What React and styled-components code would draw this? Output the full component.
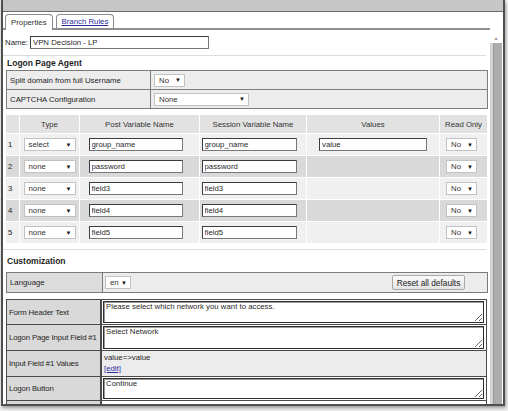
import React from "react";
import styled, { createGlobalStyle } from "styled-components";

const GlobalStyle = createGlobalStyle`
  html, body { margin: 0; padding: 0; background: #ececec; }
  body {
    font-family: "Liberation Sans", "DejaVu Sans", sans-serif;
    font-size: 7.8px;
    color: #252525;
  }
  * { box-sizing: border-box; }
`;

const rows = [
  { n: 1, type: "select", post: "group_name", sess: "group_name", value: "value" },
  { n: 2, type: "none", post: "password", sess: "password" },
  { n: 3, type: "none", post: "field3", sess: "field3" },
  { n: 4, type: "none", post: "field4", sess: "field4" },
  { n: 5, type: "none", post: "field5", sess: "field5" },
];

const Select = ({ w, children }) => (
  <SelectBox $w={w}>
    <span>{children}</span>
    <Arrow>▼</Arrow>
  </SelectBox>
);

const App = () => {
  return (
    <Frame>
      <GlobalStyle />
      <Window>
        <TopBar />
        <Tabs>
          <Tab $active>Properties</Tab>
          <Tab>
            <TabLink>Branch Rules</TabLink>
          </Tab>
        </Tabs>
        <Pane>
          <Content>
            <NameRow>
              <span>Name:</span>
              <TextInput $w={179} readOnly defaultValue="VPN Decision - LP" />
            </NameRow>
            <Rule />
            <Heading>Logon Page Agent</Heading>
            <AgentTable>
              <AgentCell>Split domain from full Username</AgentCell>
              <AgentCell>
                <Select w={31}>No</Select>
              </AgentCell>
              <AgentCell $last>CAPTCHA Configuration</AgentCell>
              <AgentCell $last>
                <Select w={95}>None</Select>
              </AgentCell>
            </AgentTable>

            <VarGrid>
              <HeadCell />
              <HeadCell>Type</HeadCell>
              <HeadCell>Post Variable Name</HeadCell>
              <HeadCell>Session Variable Name</HeadCell>
              <HeadCell>Values</HeadCell>
              <HeadCell>Read Only</HeadCell>
              {rows.map((r) => {
                const dark = r.n % 2 === 0;
                return (
                  <React.Fragment key={r.n}>
                    <Cell $dark={dark} $left>{r.n}</Cell>
                    <Cell $dark={dark}>
                      <Select w={52}>{r.type}</Select>
                    </Cell>
                    <Cell $dark={dark} $shift={-4}>
                      <TextInput $w={94} readOnly defaultValue={r.post} />
                    </Cell>
                    <Cell $dark={dark} $shift={-4}>
                      <TextInput $w={95} readOnly defaultValue={r.sess} />
                    </Cell>
                    <Cell $dark={dark}>
                      {r.value && <TextInput $w={108} readOnly defaultValue={r.value} />}
                    </Cell>
                    <Cell $dark={dark} $shift={-2}>
                      <Select w={31}>No</Select>
                    </Cell>
                  </React.Fragment>
                );
              })}
            </VarGrid>

            <Rule $gap={6} />
            <Heading $tall>Customization</Heading>
            <LangBox>
              <LangLabel>Language</LangLabel>
              <LangValue>
                <Select w={26}>en</Select>
                <ResetButton>Reset all defaults</ResetButton>
              </LangValue>
            </LangBox>

            <FormTable>
              <Label $h={25}>Form Header Text</Label>
              <Value>
                <Area readOnly defaultValue="Please select which network you want to access." />
              </Value>
              <Label $h={26}>Logon Page Input Field #1</Label>
              <Value>
                <Area readOnly defaultValue="Select Network" />
              </Value>
              <Label $h={26}>Input Field #1 Values</Label>
              <Value $grey>
                <Plain>
                  <div>value=&gt;value</div>
                  <EditLink>[edit]</EditLink>
                </Plain>
              </Value>
              <Label $h={24}>Logon Button</Label>
              <Value>
                <Area readOnly defaultValue="Continue" />
              </Value>
              <Label $h={20} />
              <Value />
            </FormTable>
          </Content>
          <Scrollbar>
            <UpArrow>▲</UpArrow>
            <Track>
              <Thumb />
            </Track>
          </Scrollbar>
        </Pane>
      </Window>
    </Frame>
  );
};

export default App;

const Frame = styled.div`
  width: 508px;
  height: 411px;
  overflow: hidden;
  padding-left: 1px;
  background: #efefef;
`;

const Window = styled.div`
  width: 504px;
  height: 406px;
  border: 2px solid #4f4f4f;
  border-top: none;
  background: #fff;
  display: flex;
  flex-direction: column;
  overflow: hidden;
  box-shadow: 1px 2px 3px rgba(0, 0, 0, 0.35);
`;

const TopBar = styled.div`
  height: 12px;
  flex: none;
  background: #c6c6c6;
  border-bottom: 1px solid #6c6c6c;
`;

const Tabs = styled.div`
  height: 18px;
  flex: none;
  display: flex;
  align-items: flex-end;
  gap: 3px;
  padding-left: 2px;
  margin-right: 13px;
  border-bottom: 2px solid #8e8e8e;
`;

const Tab = styled.div`
  height: ${(p) => (p.$active ? "16px" : "14px")};
  margin-bottom: ${(p) => (p.$active ? "-2px" : "0")};
  padding: 0 5px;
  display: flex;
  align-items: center;
  background: #fff;
  border: 1px solid #8a8a8a;
  border-bottom: none;
  border-radius: 4px 4px 0 0;
  color: #333;
`;

const TabLink = styled.span`
  color: #2d2d9c;
  text-decoration: underline;
`;

const Pane = styled.div`
  flex: 1;
  display: flex;
  min-height: 0;
`;

const Content = styled.div`
  flex: 1;
  padding: 6px 2px 0 3px;
  overflow: hidden;
`;

const NameRow = styled.div`
  display: flex;
  align-items: center;
  gap: 2px;
  height: 13px;
  margin-left: -1px;
`;

const TextInput = styled.input`
  width: ${(p) => p.$w}px;
  height: 13px;
  padding: 0 2px;
  border: 1px solid #3c3c3c;
  border-right-color: #777;
  border-bottom-color: #777;
  background: #fff;
  font: inherit;
  color: #2a2a2a;
  outline: none;
`;

const Rule = styled.div`
  height: 1px;
  margin-top: ${(p) => p.$gap ?? 6}px;
  margin-right: 2px;
  margin-left: -3px;
  background: #dcdcdc;
`;

const Heading = styled.div`
  height: ${(p) => (p.$tall ? 22 : 14)}px;
  line-height: ${(p) => (p.$tall ? 22 : 14)}px;
  padding-left: 1px;
  font-weight: bold;
  font-size: 8.5px;
  color: #1e1e1e;
`;

const AgentTable = styled.div`
  display: grid;
  grid-template-columns: 144px 1fr;
  width: 482px;
  border: 1px solid #7c7c7c;
  background: #ececec;
`;

const AgentCell = styled.div`
  height: ${(p) => (p.$last ? 18 : 19)}px;
  display: flex;
  align-items: center;
  padding-left: 3px;
  border-bottom: ${(p) => (p.$last ? "none" : "1px solid #7c7c7c")};
  &:nth-child(odd) {
    border-right: 1px solid #7c7c7c;
  }
`;

const SelectBox = styled.div`
  width: ${(p) => p.$w}px;
  height: 13px;
  display: flex;
  align-items: center;
  justify-content: space-between;
  padding: 0 3px 0 4px;
  background: #fff;
  border: 1px solid #c2c2c2;
  color: #333;
`;

const Arrow = styled.span`
  font-size: 6px;
  color: #111;
`;

const VarGrid = styled.div`
  display: grid;
  grid-template-columns: 13px 59px 119px 106px 132px 47px;
  grid-template-rows: 18px repeat(5, 21px);
  gap: 1px;
  margin-top: 6px;
  background: #fff;
`;

const HeadCell = styled.div`
  display: flex;
  align-items: center;
  justify-content: center;
  background: #e2e2e2;
  color: #333;
`;

const Cell = styled.div`
  display: flex;
  align-items: center;
  justify-content: ${(p) => (p.$left ? "flex-start" : "center")};
  padding-left: ${(p) => (p.$left ? "2px" : "0")};
  padding-right: ${(p) => (p.$shift ? -p.$shift * 2 : 0)}px;
  background: ${(p) => (p.$dark ? "#d9d9d9" : "#f0f0f0")};
`;

const LangBox = styled.div`
  display: flex;
  width: 482px;
  height: 21px;
  border: 1px solid #7a7a7a;
  background: #ececec;
`;

const LangLabel = styled.div`
  width: 96px;
  display: flex;
  align-items: center;
  padding-left: 3px;
  background: #dcdcdc;
  border-right: 1px solid #7a7a7a;
`;

const LangValue = styled.div`
  flex: 1;
  display: flex;
  align-items: center;
  justify-content: space-between;
  padding: 0 22px 0 2px;
`;

const ResetButton = styled.button`
  height: 15px;
  width: 73px;
  padding: 0;
  font: inherit;
  font-size: 8.3px;
  color: #222;
  border: 1px solid #a9a9a9;
  border-radius: 2px;
  background: linear-gradient(#fafafa, #e4e4e4);
`;

const FormTable = styled.div`
  display: grid;
  grid-template-columns: 95px 1fr;
  width: 481px;
  margin-top: 6px;
  border: 1px solid #4a4a4a;
  border-bottom: none;
`;

const Label = styled.div`
  height: ${(p) => p.$h}px;
  display: flex;
  align-items: center;
  padding-left: 2px;
  letter-spacing: -0.15px;
  background: #d9d9d9;
  border-right: 2px solid #4a4a4a;
  border-bottom: 1px solid #4a4a4a;
  white-space: nowrap;
`;

const Value = styled.div`
  display: flex;
  padding: 1px 2px 1px 1px;
  background: ${(p) => (p.$grey ? "#ececec" : "#fff")};
  border-bottom: 1px solid #4a4a4a;
`;

const Area = styled.textarea`
  flex: 1;
  height: 100%;
  padding: 0 2px;
  font: inherit;
  color: #2a2a2a;
  border: 1px solid #2e2e2e;
  box-shadow: inset 1px 1px 0 #9a9a9a;
  background: #fff;
  outline: none;
  resize: both;
  overflow: hidden;
`;

const Plain = styled.div`
  padding: 0 0 0 1px;
  line-height: 11px;
`;

const EditLink = styled.span`
  color: #2d2d9c;
  text-decoration: underline;
`;

const Scrollbar = styled.div`
  width: 13px;
  flex: none;
  display: flex;
  flex-direction: column;
  padding: 2px 1px 0 0;
`;

const UpArrow = styled.div`
  height: 11px;
  display: flex;
  align-items: center;
  justify-content: center;
  font-size: 5px;
  color: #999;
`;

const Track = styled.div`
  flex: 1;
  display: flex;
  background: #d3d3d3;
  padding-left: 3px;
`;

const Thumb = styled.div`
  flex: 1;
  background: #adadad;
  border-left: 1px solid #9a9a9a;
`;
